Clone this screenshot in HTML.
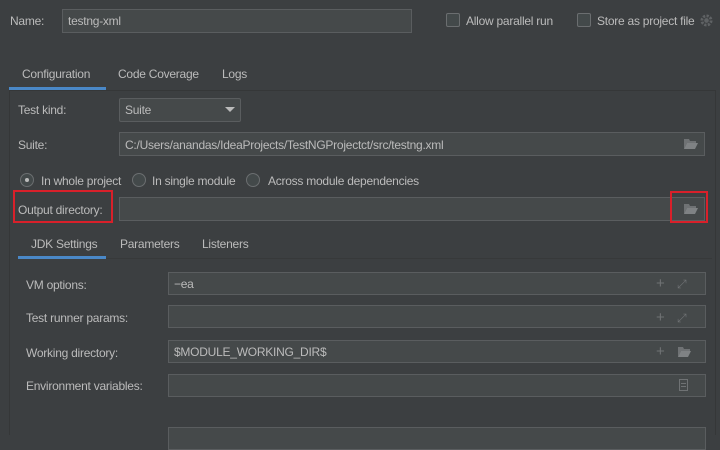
<!DOCTYPE html>
<html><head><meta charset="utf-8"><style>
*{box-sizing:border-box;margin:0;padding:0}
body{width:720px;height:430px;background:#3c3f41;font-family:"Liberation Sans",sans-serif;font-size:12px;letter-spacing:-0.25px;color:#bbbbbb;position:relative;overflow:hidden}
.a{position:absolute;white-space:nowrap}
.f{position:absolute;background:#45494a;border:1px solid #5a5d5f}
.t{position:absolute;line-height:14px;white-space:nowrap}
.cb{position:absolute;width:14px;height:14px;border:1px solid #6b6e70;border-radius:2px;background:#43494a}
.rd{position:absolute;width:14px;height:14px;border:1px solid #6b6e70;border-radius:50%;background:#43494a}
.ic{position:absolute;color:#6f7274;font-size:15px;line-height:14px}
</style></head><body>
<div class="t" style="left:10px;top:14px">Name:</div>
<div class="f" style="left:62px;top:9px;width:350px;height:24px"></div>
<div class="t" style="left:68px;top:14px">testng-xml</div>
<div class="cb" style="left:446px;top:13px"></div>
<div class="t" style="left:466px;top:14px">Allow parallel run</div>
<div class="cb" style="left:577px;top:13px"></div>
<div class="t" style="left:597px;top:14px">Store as project file</div>
<svg class="a" style="left:700px;top:14px" width="13" height="13" viewBox="0 0 14 14"><circle cx="7" cy="7" r="5" fill="none" stroke="#5f6264" stroke-width="3" stroke-dasharray="2.5 1.4"/><circle cx="7" cy="7" r="2.5" fill="#5f6264"/></svg>

<div class="t" style="left:22px;top:67px">Configuration</div>
<div class="t" style="left:118px;top:67px">Code Coverage</div>
<div class="t" style="left:222px;top:67px">Logs</div>
<div class="a" style="left:9px;top:87px;width:97px;height:3px;background:#4a88c7"></div>
<div class="a" style="left:9px;top:90px;width:707px;height:345px;border:1px solid #353738;border-bottom:none"></div>

<div class="t" style="left:18px;top:103px">Test kind:</div>
<div class="f" style="left:119px;top:98px;width:122px;height:24px;border-radius:2px"></div>
<div class="t" style="left:125px;top:103px">Suite</div>
<div class="a" style="left:225px;top:107px;width:0;height:0;border-left:5px solid transparent;border-right:5px solid transparent;border-top:5px solid #bbb"></div>

<div class="t" style="left:18px;top:138px">Suite:</div>
<div class="f" style="left:119px;top:132px;width:586px;height:24px"></div>
<div class="t" style="left:125px;top:138px">C:/Users/anandas/IdeaProjects/TestNGProjectct/src/testng.xml</div>
<svg class="a" style="left:683px;top:138px" width="16" height="12"><path d="M1 1h5l1 2h6v2H4L1 11z" fill="#6f7274"/><path d="M4 5h11l-3 6H1z" fill="#7f8284"/></svg>

<div class="rd" style="left:20px;top:173px"></div><div class="a" style="left:25px;top:178px;width:4px;height:4px;border-radius:50%;background:#bbb"></div>
<div class="t" style="left:41px;top:174px">In whole project</div>
<div class="rd" style="left:132px;top:173px"></div>
<div class="t" style="left:152px;top:174px">In single module</div>
<div class="rd" style="left:246px;top:173px"></div>
<div class="t" style="left:268px;top:174px">Across module dependencies</div>

<div class="t" style="left:18px;top:203px">Output directory:</div>
<div class="f" style="left:119px;top:197px;width:586px;height:24px"></div>
<div class="a" style="left:13px;top:190px;width:100px;height:33px;border:2px solid #d9202a"></div>
<svg class="a" style="left:683px;top:203px" width="16" height="12"><path d="M1 1h5l1 2h6v2H4L1 11z" fill="#6f7274"/><path d="M4 5h11l-3 6H1z" fill="#7f8284"/></svg>
<div class="a" style="left:670px;top:191px;width:38px;height:32px;border:2px solid #d9202a"></div>

<div class="t" style="left:31px;top:237px">JDK Settings</div>
<div class="t" style="left:120px;top:237px">Parameters</div>
<div class="t" style="left:202px;top:237px">Listeners</div>
<div class="a" style="left:18px;top:256px;width:88px;height:3px;background:#4a88c7"></div>
<div class="a" style="left:106px;top:258px;width:606px;height:1px;background:#37393a"></div>

<div class="t" style="left:26px;top:278px">VM options:</div>
<div class="f" style="left:168px;top:272px;width:538px;height:23px"></div>
<div class="t" style="left:174px;top:277px">−ea</div>
<div class="ic" style="left:656px;top:277px">+</div><div class="ic" style="left:677px;top:277px;font-size:12px">⤢</div>

<div class="t" style="left:26px;top:311px">Test runner params:</div>
<div class="f" style="left:168px;top:305px;width:538px;height:23px"></div>
<div class="ic" style="left:656px;top:311px">+</div><div class="ic" style="left:677px;top:311px;font-size:12px">⤢</div>

<div class="t" style="left:26px;top:346px">Working directory:</div>
<div class="f" style="left:168px;top:340px;width:538px;height:23px"></div>
<div class="t" style="left:174px;top:345px">$MODULE_WORKING_DIR$</div>
<div class="ic" style="left:656px;top:345px">+</div>
<svg class="a" style="left:677px;top:346px" width="15" height="12"><path d="M1 1h5l1 2h6v2H4L1 11z" fill="#6f7274"/><path d="M4 5h10l-3 6H1z" fill="#7f8284"/></svg>

<div class="t" style="left:26px;top:379px">Environment variables:</div>
<div class="f" style="left:168px;top:374px;width:538px;height:23px"></div>
<div class="a" style="left:679px;top:379px;width:9px;height:12px;border:1px solid #6f7274"></div>
<div class="a" style="left:681px;top:383px;width:5px;height:1px;background:#6f7274"></div>
<div class="a" style="left:681px;top:386px;width:5px;height:1px;background:#6f7274"></div>

<div class="f" style="left:168px;top:427px;width:538px;height:23px"></div>
</body></html>
